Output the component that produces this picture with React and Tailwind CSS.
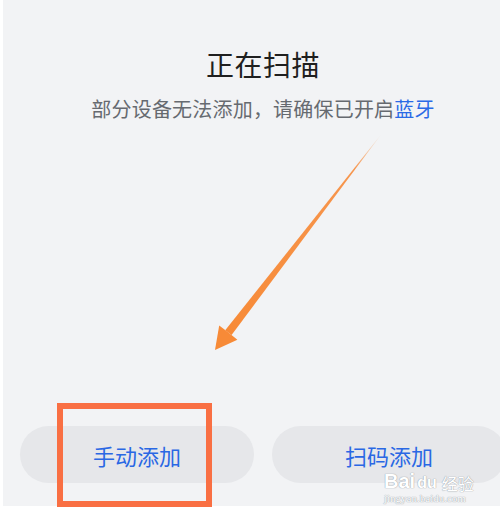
import React from "react";

const cjk = { fontFamily: '"Noto Sans CJK SC", "Noto Sans", sans-serif' };

const Arrow = () => (
  <svg
    className="absolute left-0 top-0 pointer-events-none"
    width="500"
    height="510"
    viewBox="0 0 500 510"
  >
    <defs>
      <linearGradient id="shaft" x1="382" y1="133" x2="228" y2="333" gradientUnits="userSpaceOnUse">
        <stop offset="0" stopColor="#f78b3b" stopOpacity="0" />
        <stop offset="0.18" stopColor="#f78b3b" stopOpacity="0.9" />
        <stop offset="1" stopColor="#f78a37" />
      </linearGradient>
    </defs>
    <polygon points="383,132 231.6,335 225.2,330.3" fill="url(#shaft)" />
    <polygon points="215,350 219.2,325.5 228.4,332.6 237.4,339.8" fill="#f78a37" />
  </svg>
);

const Watermark = () => (
  <div
    className="absolute left-[384px] top-[471px] flex flex-col items-start text-white pointer-events-none"
    style={{ textShadow: "0 0 1px #9aa0a8, 0 0 1px #9aa0a8" }}
  >
    <div className="flex items-end gap-[2px] leading-none">
      <span className="text-[20px] font-bold" style={{ fontFamily: '"Liberation Sans", sans-serif' }}>
        Bai
      </span>
      <span className="text-[16px] font-bold" style={{ fontFamily: '"Liberation Sans", sans-serif' }}>
        du
      </span>
      <span className="text-[16px] ml-[3px]" style={cjk}>
        经验
      </span>
    </div>
    <span className="text-[11px] leading-none mt-[2px]" style={{ fontFamily: '"Liberation Serif", serif' }}>
      jingyan.baidu.com
    </span>
  </div>
);

export default function App() {
  return (
    <div className="relative w-[500px] h-[510px] overflow-hidden bg-white" style={cjk}>
      <div className="ml-[3px] h-[506px] bg-[#f2f3f5] overflow-hidden">
        <div className="w-[520px] h-full flex flex-col items-center">
          <h1 className="mt-[50px] text-[28px] leading-[28px] text-[#1f1f1f] font-normal tracking-[0.5px]">
            正在扫描
          </h1>
          <p className="mt-[21px] text-[20px] leading-[20px] text-[#666a70] tracking-[0.2px]">
            部分设备无法添加，请确保已开启<span className="text-[#2a6ae6]">蓝牙</span>
          </p>
          <div className="mt-auto mb-[23px] w-full px-[17px] grid grid-cols-2 gap-[18px]">
            <button className="h-[57px] rounded-full bg-[#e6e7ea] flex items-center justify-center">
              <span className="text-[22px] leading-[22px] text-[#2a68e4]">手动添加</span>
            </button>
            <button className="h-[57px] rounded-full bg-[#e6e7ea] flex items-center justify-center">
              <span className="text-[22px] leading-[22px] text-[#2a68e4]">扫码添加</span>
            </button>
          </div>
        </div>
      </div>
      <Arrow />
      <div className="absolute left-[57px] top-[403px] w-[155px] h-[104px] border-[6px] border-[#f96f43]" />
      <Watermark />
    </div>
  );
}
